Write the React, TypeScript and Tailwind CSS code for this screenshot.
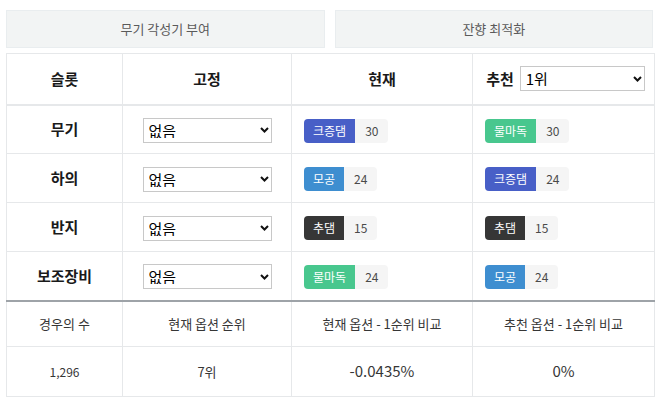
const rows = [
  { slot: "무기", cur: { label: "크증댐", value: 30, color: "bg-[#485fc7]" }, rec: { label: "물마독", value: 30, color: "bg-[#48c78e]" } },
  { slot: "하의", cur: { label: "모공", value: 24, color: "bg-[#3e8ed0]" }, rec: { label: "크증댐", value: 24, color: "bg-[#485fc7]" } },
  { slot: "반지", cur: { label: "추댐", value: 15, color: "bg-[#363636]" }, rec: { label: "추댐", value: 15, color: "bg-[#363636]" } },
  { slot: "보조장비", cur: { label: "물마독", value: 24, color: "bg-[#48c78e]" }, rec: { label: "모공", value: 24, color: "bg-[#3e8ed0]" } },
];

function Chevron() {
  return (
    <svg className="pointer-events-none absolute right-[3px] top-1/2 -translate-y-1/2" width="9" height="6" viewBox="0 0 9 6">
      <path d="M1 1l3.5 3.5L8 1" fill="none" stroke="#111" strokeWidth="2" />
    </svg>
  );
}

function Select({ value, width }: { value: string; width: string }) {
  return (
    <div className={`relative inline-block ${width} h-[25px] align-middle`}>
      <select className="w-full h-full appearance-none border border-[#c8c8c8] bg-white pl-[5px] pr-4 text-[15px] font-normal leading-none text-black outline-none">
        <option>{value}</option>
      </select>
      <Chevron />
    </div>
  );
}

function Tag({ label, value, color }: { label: string; value: number; color: string }) {
  return (
    <div className="inline-flex h-[24px] items-stretch overflow-hidden rounded-[4px] text-[12px] align-middle">
      <span className={`${color} flex items-center px-[9px] text-white`}>{label}</span>
      <span className="flex items-center bg-[#f5f5f5] px-[10px] text-[#4a4a4a]">{value}</span>
    </div>
  );
}

export default function App() {
  const cell = "border border-[#e6e8ea]";
  const split = "border border-[#e6e8ea] border-t-2 border-t-[#9ea3a8]";
  return (
    <div className="w-[659px] h-[405px] bg-white px-[6px] pt-[10px] font-['Noto_Sans_CJK_KR',sans-serif] text-[#363636]">
      <div className="flex gap-[10px]">
        <button className="h-[38px] flex-1 border border-[#e9edef] bg-[#f2f4f4] text-[13px] text-[#5a5a5a]">무기 각성기 부여</button>
        <button className="h-[38px] flex-1 border border-[#e9edef] bg-[#f2f4f4] text-[13px] text-[#5a5a5a]">잔향 최적화</button>
      </div>
      <table className="mt-[5px] w-[648px] table-fixed border-collapse">
        <colgroup>
          <col className="w-[116px]" />
          <col className="w-[169px]" />
          <col className="w-[181px]" />
          <col className="w-[182px]" />
        </colgroup>
        <thead>
          <tr className="h-[51px] text-[15px] font-bold text-[#1a1a1a]">
            <th className={`${cell} border-b-2`}>슬롯</th>
            <th className={`${cell} border-b-2`}>고정</th>
            <th className={`${cell} border-b-2`}>현재</th>
            <th className={`${cell} border-b-2`}>
              <div className="flex items-center justify-center gap-[6px] pl-[4px]">
                <span>추천</span>
                <Select value="1위" width="w-[125px]" />
              </div>
            </th>
          </tr>
        </thead>
        <tbody>
          {rows.map((r) => (
            <tr key={r.slot} className="h-[49px]">
              <td className={`${cell} text-center text-[15px] font-bold text-[#1a1a1a]`}>{r.slot}</td>
              <td className={`${cell} text-center`}>
                <Select value="없음" width="w-[129px]" />
              </td>
              <td className={`${cell} pl-[12px]`}>
                <Tag {...r.cur} />
              </td>
              <td className={`${cell} pl-[12px]`}>
                <Tag {...r.rec} />
              </td>
            </tr>
          ))}
          <tr className="h-[46px] text-center text-[13px] text-[#363636]">
            <td className={split}>경우의 수</td>
            <td className={split}>현재 옵션 순위</td>
            <td className={split}>현재 옵션 - 1순위 비교</td>
            <td className={split}>추천 옵션 - 1순위 비교</td>
          </tr>
          <tr className="h-[50px] text-center text-[#363636]">
            <td className={`${cell} text-[12px]`}>1,296</td>
            <td className={`${cell} text-[13px]`}>7위</td>
            <td className={`${cell} text-[15px]`}>-0.0435%</td>
            <td className={`${cell} text-[15px]`}>0%</td>
          </tr>
        </tbody>
      </table>
    </div>
  );
}
